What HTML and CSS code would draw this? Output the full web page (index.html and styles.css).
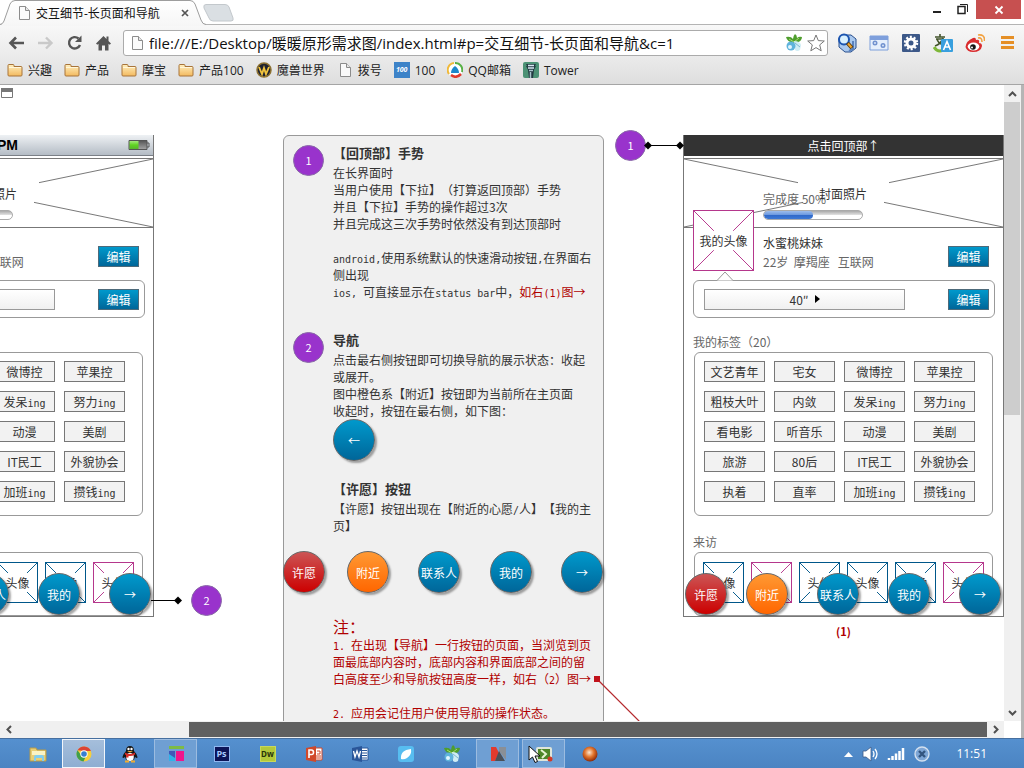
FILE: index.html
```html
<!DOCTYPE html>
<html lang="zh-CN">
<head>
<meta charset="utf-8">
<title>交互细节-长页面和导航</title>
<link rel="stylesheet" href="styles.css">
</head>
<body>
<svg class="defs" aria-hidden="true">
  <defs>
    <linearGradient id="gFolder" x1="0" y1="0" x2="0" y2="1"><stop offset="0" stop-color="#fff0c0"/><stop offset="1" stop-color="#f3b95e"/></linearGradient>
    <linearGradient id="gTab" x1="0" y1="0" x2="0" y2="1"><stop offset="0" stop-color="#ffffff"/><stop offset="1" stop-color="#f6f6f6"/></linearGradient>
    <linearGradient id="gBattery" x1="0" y1="0" x2="0" y2="1"><stop offset="0" stop-color="#a4e87c"/><stop offset=".5" stop-color="#5fd420"/><stop offset="1" stop-color="#57b52c"/></linearGradient>
    <linearGradient id="gBatteryOff" x1="0" y1="0" x2="0" y2="1"><stop offset="0" stop-color="#555"/><stop offset="1" stop-color="#a5a5a5"/></linearGradient>
    <radialGradient id="gOrb" cx=".45" cy=".4" r=".6"><stop offset="0" stop-color="#fde6cf"/><stop offset=".5" stop-color="#e2762e"/><stop offset="1" stop-color="#8d2a08"/></radialGradient>
    <symbol id="folder" viewBox="0 0 16 16"><path d="M1 3.500q0-1 1-1h4q1 0 1 1v1h7q1 0 1 1V13q0 1-1 1H2q-1 0-1-1z" fill="url(#gFolder)" stroke="#a8743a"/><path d="M2 5.500h12" stroke="#fff6da"/></symbol>
    <symbol id="page" viewBox="0 0 16 16"><path d="M3.500 1.500h6l4 4v9h-10z" fill="#fafafa" stroke="#8c8c8c"/><path d="M9.500 1.500v4h4" fill="#e6e6e6" stroke="#8c8c8c"/></symbol>
    <symbol id="bird" viewBox="0 0 18 18"><path d="M9 9Q2 8 1 3q5-1 7 2Q8 2 10 0q2 1 2 4 2-2 5-1 0 5-7 6z" fill="#4f9e2e"/><path d="M4 5l5 3 5-4" stroke="#a8dc6a" fill="none"/><path d="M9 7q6 0 7 4l-1 5q-3 2-5 0z" fill="#d0edf5"/><path d="M10 9l5 4" stroke="#7fb9d0"/><circle cx="6" cy="12" r="4.500" fill="#5fb3dc"/><circle cx="5" cy="13" r="2" fill="#e2f6ff"/></symbol>
    <symbol id="cross" viewBox="0 0 41 41"><path d="M0 0l10.500 10.500M41 0L30.500 10.500M0 41l10.500-10.500M41 41L30.500 30.500" fill="none"/></symbol>
    <symbol id="bigcross" viewBox="0 0 61 61"><path d="M0 0l20.500 20.500M61 0L40.500 20.500M0 61l20.500-20.500M61 61L40.500 40.500" fill="none"/></symbol>
  </defs>
</svg>
<div class="screen">
  <header class="chrome">
    <div class="titlebar">
      <div class="tab">
        <svg class="tab-shape" width="206" height="26" viewBox="0 0 206 26"><path d="M0 25.500Q3 24 4 21L10 4Q11.500.5 15 .5H190Q193.500.5 195 4L201 20Q202.500 24.500 206 24.500V26H0z" fill="url(#gTab)"/><path d="M0 24.500Q3 24 4 21L10 4Q11.500.5 15 .5H190Q193.500.5 195 4L201 20Q202.500 24.500 206 24.500" fill="none" stroke="#9d9d9d"/></svg>
        <svg class="i16"><use href="#page"/></svg>
        <span class="tab-title">交互细节-长页面和导航</span>
        <button class="tab-close" aria-label="关闭标签"><svg width="8" height="8" viewBox="0 0 8 8"><path d="M1 1l6 6M7 1L1 7" stroke="#555" stroke-width="1.700"/></svg></button>
      </div>
      <button class="newtab" aria-label="新标签"><svg width="32" height="18" viewBox="0 0 32 18"><path d="M4 .5h19q3 0 4 2.500l4 11q1 3-2 3H11q-3 0-4-3L2 4Q1 .5 4 .5z" fill="#dadfe3" stroke="#c3c8cc"/></svg></button>
      <div class="wincontrols">
        <button aria-label="最小化"><svg width="10" height="20" viewBox="0 0 10 20"><path d="M1 12h8" stroke="#222" stroke-width="2"/></svg></button>
        <button aria-label="还原"><svg width="12" height="20" viewBox="0 0 12 20"><path d="M1 6.500h7v7H1z" fill="none" stroke="#222" stroke-width="1.500"/><path d="M3 4.500h7.500V12" fill="none" stroke="#222"/></svg></button>
        <button class="close" aria-label="关闭"><svg width="10" height="10" viewBox="0 0 10 10"><path d="M1.500 1.500l7 7M8.500 1.500l-7 7" stroke="#fff" stroke-width="1.800"/></svg></button>
      </div>
    </div>
    <div class="toolbar">
      <div class="navbuttons">
        <button aria-label="后退"><svg width="17" height="16" viewBox="0 0 17 16"><path d="M16 8H3M8 2.500L2.500 8 8 13.500" fill="none" stroke="#555" stroke-width="2.600"/></svg></button>
        <button aria-label="前进"><svg width="17" height="16" viewBox="0 0 17 16"><path d="M1 8h13M9 2.500L14.500 8 9 13.500" fill="none" stroke="#c9c9c9" stroke-width="2.400"/></svg></button>
        <button aria-label="刷新"><svg width="17" height="16" viewBox="0 0 17 16"><path d="M12.500 3.500A5.700 5.700 0 1 0 14 10" fill="none" stroke="#555" stroke-width="2.400"/><path d="M15.500 .5v6.500H9z" fill="#555"/></svg></button>
        <button aria-label="主页"><svg width="17" height="16" viewBox="0 0 17 16"><path d="M8.500 1L1 8.500l1.300 1.300L3.500 8.700V15.500h3.500v-5h3v5h3.500V8.700l1.200 1.100L16 8.500l-2.500-2.600V1.500h-2v2.400z" fill="#555"/></svg></button>
      </div>
      <div class="omnibox">
        <svg class="i16"><use href="#page"/></svg>
        <input type="text" aria-label="地址" value="file:///E:/Desktop/暖暖原形需求图/index.html#p=交互细节-长页面和导航&amp;c=1">
        <svg class="i18"><use href="#bird"/></svg>
        <svg class="i18" viewBox="0 0 18 18"><path d="M9 1l2.300 5.600 6 .4-4.600 3.900 1.500 5.900L9 13.600l-5.200 3.200 1.500-5.900L.7 7l6-.4z" fill="#fff" stroke="#777"/></svg>
      </div>
      <div class="extensions">
        <button aria-label="搜索"><svg class="i20" viewBox="0 0 20 20"><path d="M6 2h8l5 4v9l-5 4H8l-6-5V5z" fill="#a9c8ee" stroke="#294f8d"/><path d="M16 8v8l-4 2" stroke="#5a82be" fill="none" stroke-width="2"/><circle cx="7" cy="6.500" r="5" fill="#d8f0ff" stroke="#1c55b0" stroke-width="2"/><path d="M10.500 10l4.500 5" stroke="#5c3d10" stroke-width="4"/><path d="M11 10.500l3.500 4" stroke="#f0a52a" stroke-width="2"/></svg></button>
        <button aria-label="窗口"><svg class="i20" viewBox="0 0 20 20"><path d="M1 3h18v14H1z" fill="#e5effc" stroke="#7d9fdb"/><path d="M1 3h18v4H1z" fill="#7e9fdc"/><circle cx="6" cy="10" r="1.700" fill="none" stroke="#7192cf" stroke-width="1.600"/><circle cx="14" cy="12.500" r="1.700" fill="none" stroke="#7192cf" stroke-width="1.600"/></svg></button>
        <button aria-label="设置"><svg class="i20" viewBox="0 0 20 20"><rect x="1" y="1" width="18" height="18" rx="1" fill="#3c5888"/><circle cx="10" cy="10" r="6" fill="none" stroke="#fff" stroke-width="2.500" stroke-dasharray="2 1.770"/><circle cx="10" cy="10" r="4" fill="none" stroke="#fff" stroke-width="3"/></svg></button>
        <button aria-label="翻译"><svg class="i20" viewBox="0 0 20 20"><path d="M2 4h10M7 1v3M3 6h8M10 5q-2 6-8 8M4 6q1 4 6 6" stroke="#43542c" stroke-width="1.600" fill="none"/><path d="M1 14q4 6 9 3" stroke="#7eb739" stroke-width="3" fill="none"/><rect x="8" y="6" width="12" height="13" rx="1" fill="#379fde"/><path d="M10.500 17L14 8.500l3.500 8.500M12 14h4" stroke="#fff" stroke-width="1.600" fill="none"/></svg></button>
        <button aria-label="微博"><svg class="i20" viewBox="0 0 20 20"><path d="M8 5q-7 3-7.500 9Q2 19 8 19q8 0 9-6 0-3-3-3 1-4-3-3Q11 4 8 5z" fill="#d92c2e"/><ellipse cx="8.500" cy="13.500" rx="5.800" ry="4" fill="#fff"/><circle cx="8" cy="14" r="2.800" fill="#151515"/><circle cx="7" cy="14.500" r="1" fill="#fff"/><path d="M13 5q4-1 4 4M13 2q7-1 6.500 6" fill="none" stroke="#f2a241" stroke-width="1.600"/></svg></button>
        <button aria-label="菜单"><svg class="i20" viewBox="0 0 20 20"><path d="M4 4.500h13M4 9.500h13M4 14.500h13" stroke="#e58f26" stroke-width="3"/></svg></button>
      </div>
    </div>
    <nav class="bookmarks" aria-label="书签">
      <a href="#"><svg class="i16"><use href="#folder"/></svg>兴趣</a>
      <a href="#"><svg class="i16"><use href="#folder"/></svg>产品</a>
      <a href="#"><svg class="i16"><use href="#folder"/></svg>摩宝</a>
      <a href="#"><svg class="i16"><use href="#folder"/></svg>产品100</a>
      <a href="#"><svg class="i16" viewBox="0 0 16 16"><circle cx="8" cy="8" r="7" fill="#20232e" stroke="#8d7131" stroke-width="1.500"/><path d="M3 5l3 7 2-6 2 6 3-7" fill="none" stroke="#f1c33d" stroke-width="1.900"/></svg>魔兽世界</a>
      <a href="#"><svg class="i16"><use href="#page"/></svg>拨号</a>
      <a href="#"><span class="badge100">100</span>100</a>
      <a href="#"><svg class="i16" viewBox="0 0 16 16"><circle cx="8" cy="8" r="7.500" fill="#fff"/><path d="M2 12A7 7 0 0 1 7 1" fill="none" stroke="#f0b93a" stroke-width="2"/><path d="M8 1a7 7 0 0 1 7 9" fill="none" stroke="#58b146" stroke-width="2"/><path d="M4 13q5 4 10-1" fill="none" stroke="#e03a2c" stroke-width="2.500"/><path d="M8 4q4 3 4 7H4q0-4 4-7z" fill="#1c87cb"/></svg>QQ邮箱</a>
      <a href="#"><svg class="i16" viewBox="0 0 16 16"><rect width="16" height="16" rx="2" fill="#4c9275"/><path d="M3 2h10l-1 2h1l-2 4-1 8H6L5 8 3 4h1z" fill="#233b42"/><path d="M5 3.500h6M5 6h6" stroke="#d7e7f2" stroke-width="1.300"/><path d="M6 8.500h4M7.500 10v6" stroke="#a9c4cc" stroke-width="1.500"/></svg>Tower</a>
    </nav>
  </header>

  <div class="viewport">
    <main class="canvas">
      <svg class="corner" width="13" height="11" viewBox="0 0 13 11"><path d="M.5.5h11v9H.5z" fill="#fff" stroke="#777"/><path d="M0 0h12v4H0z" fill="#777"/></svg>

      <section class="board clipped">
        <div class="phone">
          <div class="status"><span>PM</span><svg width="22" height="12" viewBox="0 0 22 12"><path d="M1 1.500h18v9H1z" fill="url(#gBatteryOff)" stroke="#555"/><path d="M1.500 2h9v8h-9z" fill="url(#gBattery)"/><path d="M19 4h2v4h-2" fill="none" stroke="#555"/></svg></div>
          <div class="cover">
            <svg class="coverlines" viewBox="0 0 319 69" preserveAspectRatio="none"><path d="M0 0l114 24M319 0L205 24M0 69l119-25M319 69L200 44" stroke="#777" fill="none"/></svg>
            <span class="covertext">封面照片</span>
            <label class="complete">完成度 50%<span class="bar"><span class="fill"></span></span></label>
            <div class="avatar pink"><svg><use href="#bigcross"/></svg><span>我的头像</span></div>
          </div>
          <div class="profile"><p><b>水蜜桃妹妹</b><br>22岁&nbsp; 摩羯座 &nbsp; 互联网</p><button class="edit">编辑</button></div>
          <div class="bubble"><button class="voice">40″ <i></i></button><button class="edit">编辑</button></div>
          <h3>我的标签（20）</h3>
          <div class="tags">
            <button>文艺青年</button><button>宅女</button><button>微博控</button><button>苹果控</button>
            <button>粗枝大叶</button><button>内敛</button><button>发呆<span class="en">ing</span></button><button>努力<span class="en">ing</span></button>
            <button>看电影</button><button>听音乐</button><button>动漫</button><button>美剧</button>
            <button>旅游</button><button>80后</button><button>IT民工</button><button>外貌协会</button>
            <button>执着</button><button>直率</button><button>加班<span class="en">ing</span></button><button>攒钱<span class="en">ing</span></button>
          </div>
          <h3>来访</h3>
          <div class="visitors">
            <div class="face"><svg><use href="#cross"/></svg>头像</div><div class="face pink"><svg><use href="#cross"/></svg>头像</div><div class="face"><svg><use href="#cross"/></svg>头像</div><div class="face"><svg><use href="#cross"/></svg>头像</div><div class="face"><svg><use href="#cross"/></svg>头像</div><div class="face pink"><svg><use href="#cross"/></svg>头像</div>
          </div>
          <nav class="dock"><button class="round red">许愿</button><button class="round orange">附近</button><button class="round">联系人</button><button class="round">我的</button><button class="round">→</button></nav>
        </div>
      </section>

      <section class="notes">
        <article>
          <span class="pin">1</span>
          <div>
            <h2>【回顶部】手势</h2>
            <p>在长界面时<br>当用户使用【下拉】（打算返回顶部）手势<br>并且【下拉】手势的操作超过3次<br>并且完成这三次手势时依然没有到达顶部时<br><br><span class="en">android,</span>使用系统默认的快速滑动按钮<span class="en">,</span>在界面右<br>侧出现<br><span class="en">ios, </span>可直接显示在<span class="en">status bar</span>中，<em>如右<span class="en">(1)</span>图→</em></p>
          </div>
        </article>
        <article>
          <span class="pin">2</span>
          <div>
            <h2>导航</h2>
            <p>点击最右侧按钮即可切换导航的展示状态：收起<br>或展开。<br>图中橙色系【附近】按钮即为当前所在主页面<br>收起时，按钮在最右侧，如下图：</p>
            <button class="round">←</button>
          </div>
        </article>
        <article class="wish">
          <div>
            <h2>【许愿】按钮</h2>
            <p>【许愿】按钮出现在【附近的心愿<span class="en">/</span>人】【我的主<br>页】</p>
          </div>
        </article>
        <nav class="samples"><button class="round red">许愿</button><button class="round orange">附近</button><button class="round">联系人</button><button class="round">我的</button><button class="round">→</button></nav>
        <article class="remark">
          <div>
            <h4>注：</h4>
            <p><span class="en">1. </span>在出现【导航】一行按钮的页面，当浏览到页<br>面最底部内容时，底部内容和界面底部之间的留<br>白高度至少和导航按钮高度一样，如右（<span class="en">2</span>）图→<br><br><span class="en">2. </span>应用会记住用户使用导航的操作状态。</p>
          </div>
        </article>
      </section>

      <section class="board">
        <div class="phone">
          <button class="status totop">点击回顶部↑</button>
          <div class="cover">
            <svg class="coverlines" viewBox="0 0 319 69" preserveAspectRatio="none"><path d="M0 0l114 24M319 0L205 24M0 69l119-25M319 69L200 44" stroke="#777" fill="none"/></svg>
            <span class="covertext">封面照片</span>
            <label class="complete">完成度 50%<span class="bar"><span class="fill"></span></span></label>
            <div class="avatar pink"><svg><use href="#bigcross"/></svg><span>我的头像</span></div>
          </div>
          <div class="profile"><p><b>水蜜桃妹妹</b><br>22岁&nbsp; 摩羯座 &nbsp; 互联网</p><button class="edit">编辑</button></div>
          <div class="bubble"><svg class="beak" width="18" height="10" viewBox="0 0 18 10"><path d="M1 9.500L9 1l8 8.500" fill="#fff" stroke="#999"/></svg><button class="voice">40″ <i></i></button><button class="edit">编辑</button></div>
          <h3>我的标签（20）</h3>
          <div class="tags">
            <button>文艺青年</button><button>宅女</button><button>微博控</button><button>苹果控</button>
            <button>粗枝大叶</button><button>内敛</button><button>发呆<span class="en">ing</span></button><button>努力<span class="en">ing</span></button>
            <button>看电影</button><button>听音乐</button><button>动漫</button><button>美剧</button>
            <button>旅游</button><button>80后</button><button>IT民工</button><button>外貌协会</button>
            <button>执着</button><button>直率</button><button>加班<span class="en">ing</span></button><button>攒钱<span class="en">ing</span></button>
          </div>
          <h3>来访</h3>
          <div class="visitors">
            <div class="face"><svg><use href="#cross"/></svg>头像</div><div class="face pink"><svg><use href="#cross"/></svg>头像</div><div class="face"><svg><use href="#cross"/></svg>头像</div><div class="face"><svg><use href="#cross"/></svg>头像</div><div class="face"><svg><use href="#cross"/></svg>头像</div><div class="face pink"><svg><use href="#cross"/></svg>头像</div>
          </div>
          <nav class="dock"><button class="round red">许愿</button><button class="round orange">附近</button><button class="round">联系人</button><button class="round">我的</button><button class="round">→</button></nav>
        </div>
        <p class="caption">(1)</p>
      </section>

      <span class="pin marker-two">2</span>
      <span class="pin marker-one">1</span>
      <svg class="link-two" width="32" height="10" viewBox="0 0 32 10"><path d="M0 5.500h28" stroke="#000"/><path d="M27 1.500l4 4-4 4-4-4z"/></svg>
      <svg class="link-one" width="40" height="10" viewBox="0 0 40 10"><path d="M4 5.500h32" stroke="#000"/><path d="M4 1.500l4 4-4 4-4-4zM36 1.500l4 4-4 4-4-4z"/></svg>
      <svg class="link-red" width="50" height="48" viewBox="0 0 50 48"><path d="M3 3l47 47" stroke="#b52a2e" stroke-width="1.200"/><path d="M0 0h6v6H0z" fill="#c1121b"/></svg>
    </main>
    <div class="vscroll">
      <button aria-label="向上"><svg width="9" height="6" viewBox="0 0 9 6"><path d="M1 5l3.500-3.500L8 5" fill="none" stroke="#505050" stroke-width="2"/></svg></button>
      <div class="vtrack"><div class="vthumb"></div></div>
      <button aria-label="向下"><svg width="9" height="6" viewBox="0 0 9 6"><path d="M1 1l3.500 3.500L8 1" fill="none" stroke="#505050" stroke-width="2"/></svg></button>
    </div>
  </div>
  <div class="hscroll">
    <button aria-label="向左"><svg width="6" height="9" viewBox="0 0 6 9"><path d="M5 1L1.500 4.500 5 8" fill="none" stroke="#505050" stroke-width="2"/></svg></button>
    <div class="htrack"><div class="hthumb"></div></div>
    <button aria-label="向右"><svg width="6" height="9" viewBox="0 0 6 9"><path d="M1 1l3.500 3.500L1 8" fill="none" stroke="#505050" stroke-width="2"/></svg></button>
    <div class="hcorner"></div>
  </div>

  <footer class="taskbar">
    <button aria-label="资源管理器"><svg class="i18" viewBox="0 0 18 18"><path d="M1 3h6l1 2h9v11H1z" fill="#e9cf75" stroke="#b79b4a"/><path d="M3 6h13v4H3z" fill="#fbf3c4"/><path d="M5 16v-4q0-2 2-2h6q2 0 2 2v4h-2v-3H7v3z" fill="#82cdef"/></svg></button>
    <button class="active" aria-label="浏览器"><svg class="i18" viewBox="0 0 18 18"><circle cx="9" cy="9" r="7.500" fill="#f6cf3c"/><path d="M2.500 5.300A7.500 7.500 0 0 1 16 6H9z" fill="#dc4335"/><path d="M2.500 5.200A7.500 7.500 0 0 0 8.500 16.500L11 11 6 10z" fill="#3f9f4b"/><circle cx="9" cy="9" r="3.700" fill="#fff"/><circle cx="9" cy="9" r="2.800" fill="#367fd0"/></svg></button>
    <button aria-label="QQ"><svg class="i18" viewBox="0 0 18 18"><path d="M9 1Q5 1 5 6q-3 3-3.500 6 0 2 2.500 0 1 4 5 4t5-4q2.500 2 2.500 0Q16 9 13 6q0-5-4-5z" fill="#171717"/><ellipse cx="9" cy="12" rx="3.800" ry="4" fill="#fff"/><path d="M4 7.500q5 3 10 0v2q-5 3-10 0zM5 9h2.500v3.500H5z" fill="#d92c26"/><circle cx="7.500" cy="4" r="1.200" fill="#fff"/><circle cx="10.500" cy="4" r="1.200" fill="#fff"/><path d="M6 6h6L9 7.500z" fill="#f4b13a"/><path d="M4 16.500h4M10 16.500h4" stroke="#efad33" stroke-width="1.800"/></svg></button>
    <button class="open" aria-label="Axure"><svg class="i18" viewBox="0 0 18 18"><path d="M2 1h15v3H2z" fill="#7dbb45"/><path d="M2 6h6v10H2z" fill="#4059b8"/><path d="M2 9l6 4v3H2z" fill="#2db4ea"/><path d="M9 6h8v10H9z" fill="#f0168c"/></svg></button>
    <button aria-label="Photoshop"><span class="app ps">Ps</span></button>
    <button aria-label="Dreamweaver"><span class="app dw">Dw</span></button>
    <button aria-label="PowerPoint"><svg class="i18" viewBox="0 0 18 18"><path d="M9 3h8v12H9z" fill="#fff" stroke="#d0492a"/><path d="M12 6h3v3h-3M11 11h5M11 13h5" stroke="#d0492a" fill="none"/><path d="M1 3l10-2v16L1 15z" fill="#d0492a"/><path d="M4 13V5h2.500q2 0 2 2.300T6.500 9.500H4" fill="none" stroke="#fff" stroke-width="1.600"/></svg></button>
    <button aria-label="Word"><svg class="i18" viewBox="0 0 18 18"><path d="M9 3h8v12H9z" fill="#fff" stroke="#2a5699"/><path d="M11 5.500h5M11 8h5M11 10.500h5M11 13h5" stroke="#2a5699"/><path d="M1 3l10-2v16L1 15z" fill="#2a5699"/><path d="M2.500 6L4 12l2-6 2 6 1.500-6" fill="none" stroke="#fff" stroke-width="1.300"/></svg></button>
    <button aria-label="便签"><svg class="i18" viewBox="0 0 18 18"><rect x="1" y="1" width="16" height="16" rx="3" fill="#57bdf0"/><path d="M4 14q-1-9 10-10 1 6-4 9-3 2-6 1z" fill="#fff"/></svg></button>
    <button aria-label="暖暖"><svg class="i18"><use href="#bird"/></svg></button>
    <button class="open" aria-label="媒体"><svg class="i18" viewBox="0 0 18 18"><path d="M2 2h5l3 6-4 8H2z" fill="#e23a2e"/><path d="M10 2h7v13l-7-9z" fill="#8a8f96"/><path d="M10 6l6 10H6z" fill="#4c5058"/></svg></button>
    <button class="open" aria-label="录屏"><svg class="i18" viewBox="0 0 18 18"><rect x="1" y="2" width="16" height="14" rx="2" fill="#dfe5da"/><rect x="3" y="4" width="12" height="10" fill="#4e8628"/><path d="M6 5l5 4-4 4" fill="none" stroke="#e7f4d3" stroke-width="2"/><circle cx="15" cy="14" r="2.500" fill="#d13a28"/></svg><svg class="cursor" width="13" height="19" viewBox="0 0 13 19"><path d="M1 1v14l3.500-3 2.500 5.500 2.500-1L7 11h5z" fill="#fff" stroke="#111"/></svg></button>
    <button aria-label="球"><svg class="i18" viewBox="0 0 18 18"><circle cx="9" cy="9" r="7.500" fill="url(#gOrb)"/></svg></button>
    <div class="tray">
      <svg width="9" height="18" viewBox="0 0 9 18"><path d="M0 12l4.500-5L9 12z" fill="#fff"/></svg>
      <svg class="i18" viewBox="0 0 18 18"><path d="M2 6h3l5-4v14l-5-4H2z" fill="#fff" stroke="#3c5c88" stroke-width=".8"/><path d="M12 6q2 3 0 6M14 4q4 5 0 10" fill="none" stroke="#fff" stroke-width="1.300"/></svg>
      <svg class="i18" viewBox="0 0 18 18"><path d="M2 15v-2M5.500 15v-4M9 15V8.500" stroke="#fff" stroke-width="2.500"/><path d="M12.500 15V6M16 15V3" stroke="#fff" stroke-width="2.500"/></svg>
      <svg class="i18" viewBox="0 0 18 18"><circle cx="9" cy="9" r="7" fill="#7da6d6" stroke="#d3e0ef" stroke-width="1.400"/><path d="M6 6l6 6M12 6l-6 6" stroke="#33557f" stroke-width="2.400"/></svg>
      <time>11:51</time>
    </div>
  </footer>
</div>
</body>
</html>
```

FILE: styles.css
```css
* { box-sizing: border-box; }
body { margin: 0; font: 12px/17px "Open Sans", "Noto Sans CJK SC", sans-serif; color: #333; background: #fff; }
button { font: inherit; color: inherit; margin: 0; padding: 0; border: 0; background: none; cursor: default; white-space: nowrap; }
svg { display: block; flex: none; }
h2, h3, h4, p { margin: 0; }
.defs { position: absolute; width: 0; height: 0; }
.i16 { width: 16px; height: 16px; }
.i18 { width: 18px; height: 18px; }
.i20 { width: 20px; height: 20px; }

.screen { display: flex; flex-direction: column; height: 100vh; min-height: 600px; overflow: hidden; }

/* Browser frame */
.titlebar { display: flex; height: 25px; align-items: flex-start; border-bottom: 1px solid #b4b4b4; }
.tab { position: relative; z-index: 1; display: flex; align-items: center; width: 206px; height: 26px; padding-left: 16px; gap: 4px; }
.tab-shape { position: absolute; left: 0; top: 0; }
.tab > * + * { position: relative; }
.tab-title { color: #111; flex: 1; white-space: nowrap; }
.tab-close { margin-right: 17px; }
.newtab { margin-top: 4px; margin-left: -4px; }
.wincontrols { display: flex; margin-left: auto; margin-right: 3px; }
.wincontrols button { display: flex; justify-content: center; width: 26px; }
.wincontrols .close { width: 45px; height: 19px; align-items: center; background: #c75050; }
.toolbar { display: flex; align-items: center; height: 35px; padding-left: 8px; padding-right: 7px; background: linear-gradient(#f8f8f8, #e9e9e9); }
.navbuttons { display: flex; gap: 12px; width: 115px; }
.omnibox { display: flex; align-items: center; flex: 1; min-width: 0; height: 26px; padding: 0 2px 0 5px; gap: 4px; border: 1px solid #ababab; border-radius: 3px; background: #fff; }
.omnibox input { flex: 1; min-width: 0; height: 24px; padding: 0; border: 0; outline: 0; background: none; color: #111; font: 15px/22px "Open Sans", "Noto Sans CJK SC", sans-serif; }
.extensions { display: flex; gap: 12px; margin-left: 9px; }
.bookmarks { display: flex; align-items: center; gap: 12px; height: 25px; padding: 0 7px 4px; border-bottom: 1px solid #a5a5a5; background: linear-gradient(#e9e9e9, #dedede); }
.bookmarks a { display: flex; align-items: center; gap: 5px; color: #222; text-decoration: none; white-space: nowrap; }
.badge100 { width: 16px; height: 16px; background: #3d83c8; color: #fff; font: italic bold 7px/16px "Open Sans", sans-serif; text-align: center; }

/* Page area */
.viewport { display: flex; flex: 1; min-height: 0; border-right: 3px solid #b5b5b5; }
.canvas { position: relative; display: flex; align-items: flex-start; flex: 1; min-width: 0; padding-top: 50px; overflow: hidden; font-family: "Noto Sans CJK SC", sans-serif; white-space: nowrap; text-spacing-trim: space-all; }
.corner { position: absolute; left: 1px; top: 3px; }
.en { font: 10px/1px "DejaVu Sans Mono", monospace; white-space: pre; }
.board { flex: none; width: 321px; }
.board.clipped { display: flex; justify-content: flex-end; width: 154px; overflow: hidden; }
.notes { flex: none; width: 321px; height: 700px; margin: 0 79px 0 129px; padding-top: 6px; border: 1px solid #999; border-radius: 6px; background: #f0f0f0; }
.notes article { display: flex; gap: 9px; margin-bottom: 29px; padding-left: 9px; }
.notes h2 { font-size: 13px; line-height: 22px; }
.notes em { font-style: normal; color: #b00000; }
.notes article + article { margin-bottom: 17px; }
.notes .wish, .notes .remark { padding-left: 49px; }
.notes h4 { font-size: 16px; font-weight: 400; line-height: 20px; }
.notes .remark { color: #b00000; }
.samples { display: grid; grid-template-columns: 64px 71px 72px 71px 42px; margin: 0 -1px 23px; }
.pin { flex: none; width: 31px; height: 31px; margin-top: 3px; border: 1px solid #8a6aa8; border-radius: 50%; background: #9933cc; color: #fff; text-align: center; line-height: 29px; font-size: 11px; }
.round { display: block; width: 42px; height: 42px; border: 1px solid #666; border-radius: 50%; background: linear-gradient(#0099cc, #006699); box-shadow: 2px 2px 2px rgba(0, 0, 0, .35); color: #fff; text-align: center; }
.round.red { background: linear-gradient(#cc5555, #cc0000); }
.round.orange { background: linear-gradient(#ff9933, #ff6600); }

/* Phone wireframe */
.phone { position: relative; flex: none; width: 321px; border: solid #777; border-width: 0 1px 1px; overflow: hidden; background: #fff; }
.status { display: flex; align-items: center; justify-content: flex-end; gap: 110px; width: 100%; height: 21px; margin-bottom: 2px; padding-right: 3px; border-bottom: 1px solid #7a7f86; background: linear-gradient(#eef1f4, #b4bcc5); color: #000; font: bold 14px/20px "Liberation Sans", sans-serif; }
.totop { justify-content: center; padding: 0; border: 0; background: #333; color: #fff; font: 12px/20px "Noto Sans CJK SC", sans-serif; }
.cover { position: relative; height: 70px; border: solid #777; border-width: 1px 0; }
.coverlines { width: 100%; height: 100%; }
.covertext { position: absolute; left: 135px; top: 26px; z-index: 1; }
.complete { position: absolute; left: 79px; top: 31px; color: #666; }
.bar { display: block; width: 100px; height: 10px; margin-top: 3px; border: 1px solid #aaa; border-radius: 5px; background: linear-gradient(#aaa, #ddd 45%, #fff 50%, #fff); overflow: hidden; }
.fill { display: block; width: 50%; height: 8px; border-radius: 4px; background: linear-gradient(#9dbdec, #6f9be0 45%, #2f68c8 50%, #3d79d6); }
.avatar { position: absolute; left: 9px; top: 51px; z-index: 1; display: flex; align-items: center; justify-content: center; width: 61px; height: 61px; border: 1px solid #b5378c; background: #fff; color: #333; }
.avatar svg, .face svg { position: absolute; inset: 0; width: 100%; height: 100%; stroke: #00578a; }
.profile { display: flex; justify-content: space-between; height: 52px; padding: 5px 14px 0 79px; color: #666; line-height: 19px; }
.profile b { font-weight: 400; color: #333; }
.profile .edit { margin-top: 13px; }
.edit { width: 41px; height: 21px; border: 1px solid #4d6a7a; background: linear-gradient(#0099cc, #006699); color: #fff; line-height: 19px; }
.bubble { position: relative; display: flex; align-items: center; justify-content: space-between; height: 38px; margin: 0 8px 0 9px; padding: 0 5px 0 10px; border: 1px solid #999; border-radius: 6px; }
.beak { position: absolute; left: 22px; top: -10px; }
.voice { display: flex; align-items: center; justify-content: center; gap: 6px; width: 201px; height: 21px; border: 1px solid #999; background: linear-gradient(#fff, #f0f0f0); }
.voice i { border: solid transparent; border-width: 4px 0 4px 5px; border-left-color: #000; }
.phone h3 { margin: 14px 0 0 9px; font-size: 12px; font-weight: 400; line-height: 20px; color: #666; }
.phone .tags + h3 { margin-top: 16px; }
.tags { display: grid; grid-template-columns: repeat(4, 61px); grid-auto-rows: 21px; gap: 9px; height: 164px; margin: 0 10px; padding: 8px 9px; border: 1px solid #999; border-radius: 6px; }
.tags button { border: 1px solid #777; background: #f2f2f2; line-height: 19px; }
.visitors { display: flex; gap: 7px; height: 64px; margin: 0 10px; padding: 9px 8px; border: 1px solid #999; border-radius: 6px; }
.face { position: relative; flex: none; display: flex; align-items: center; justify-content: center; width: 41px; height: 41px; border: 1px solid #00578a; }
.face.pink { border-color: #b5378c; }
.pink svg { stroke: #b5378c; }
.dock { position: absolute; left: 1px; bottom: 1px; z-index: 2; display: grid; grid-template-columns: 61px 71px 71px 71px 42px; }
.caption { margin-top: 6px; text-align: center; color: #b00000; font-weight: 700; font-size: 11px; }

.marker-one, .marker-two, .link-one, .link-two, .link-red { position: absolute; margin: 0; }
.marker-two { left: 191px; top: 500px; }
.marker-one { left: 615px; top: 45px; }
.link-two { left: 151px; top: 510px; }
.link-one { left: 644px; top: 55px; }
.link-red { left: 594px; top: 591px; }

.vscroll { display: flex; flex-direction: column; flex: none; width: 17px; background: #f0f0f0; }
.vscroll button, .hscroll button { display: flex; align-items: center; justify-content: center; flex: none; width: 17px; height: 17px; }
.vtrack { flex: 1; padding-right: 1px; }
.vthumb { height: 52%; background: #cdcdcd; }
.hscroll { display: flex; flex: none; height: 17px; border-right: 3px solid #b5b5b5; background: #f0f0f0; }
.htrack { flex: 1; display: flex; justify-content: flex-end; padding-top: 1px; padding-bottom: 1px; }
.hthumb { width: 82.3%; background: #606060; }
.hcorner { width: 17px; background: #fff; }

/* Taskbar */
.taskbar { display: flex; flex: none; align-items: stretch; gap: 3px; height: 30px; padding-left: 16px; background: linear-gradient(#5590cf, #4b84c2); border-top: 1px solid #466f9f; }
.taskbar button { position: relative; display: flex; align-items: center; justify-content: center; width: 43px; }
.taskbar .open { border: 1px solid #9cbce0; background: #6f9fd3; }
.taskbar .active { border: 1px solid #f2f6fb; background: linear-gradient(#a5bedb, #8faed2); }
.cursor { position: absolute; left: 5px; top: 5px; }
.app { width: 16px; height: 16px; font: bold 9px/14px "Open Sans", sans-serif; }
.ps { border: 1px solid #8fb6f0; background: #0c1458; color: #a8cbff; }
.dw { border: 1px solid #c8d85a; background: #b3c93a; color: #27330a; font-size: 8px; }
.tray { display: flex; align-items: center; gap: 8px; margin-left: auto; padding-right: 37px; color: #fff; font-size: 12px; }
.tray time { margin-left: 17px; }
```
